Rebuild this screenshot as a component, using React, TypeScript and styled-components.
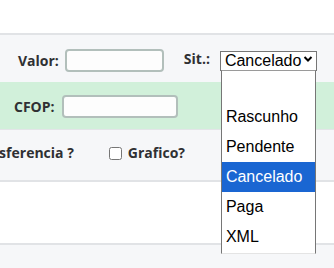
import React from "react";
import styled, { createGlobalStyle } from "styled-components";

const Global = createGlobalStyle`
  html, body { margin: 0; padding: 0; background: #ffffff; }
  body { font-family: "Open Sans", "Noto Sans", sans-serif; width: 334px; height: 268px; overflow: hidden; }
  * { box-sizing: border-box; }
`;

const Page = styled.div`
  display: flex;
  flex-direction: column;
  width: 334px;
  height: 268px;
  overflow: hidden;
  background: #f6f7f9;
`;

const TopSpace = styled.div`
  height: 33px;
  background: #ffffff;
`;

const Row = styled.div<{ $bg: string; $h: number; $top: number; $pl: number; $bt?: boolean; $bb?: boolean }>`
  display: flex;
  align-items: flex-start;
  height: ${(p) => p.$h}px;
  padding-top: ${(p) => p.$top}px;
  padding-left: ${(p) => p.$pl}px;
  background: ${(p) => p.$bg};
  border-top: ${(p) => (p.$bt ? "2px solid #e1e3e6" : "none")};
  border-bottom: ${(p) => (p.$bb ? "1px solid #e3e5e8" : "none")};
  position: relative;
  flex-shrink: 0;
`;

const Field = styled.div<{ $ml?: number; $gap: number }>`
  display: flex;
  align-items: center;
  gap: ${(p) => p.$gap}px;
  margin-left: ${(p) => p.$ml ?? 0}px;
`;

const Label = styled.label`
  font-family: "Open Sans", "Noto Sans", sans-serif;
  font-weight: 700;
  font-size: 14px;
  color: #2f3033;
  white-space: nowrap;
  line-height: 20px;
`;

const TextInput = styled.input<{ $w: number }>`
  width: ${(p) => p.$w}px;
  height: 23px;
  border: 2px solid #b2bfbb;
  border-radius: 4px;
  background: #fdfdfd;
  padding: 0 4px;
  outline: none;
  margin: 0;
`;

const SelectWrap = styled.div`
  position: relative;
  width: 97px;
  height: 20px;
`;

const Select = styled.select`
  appearance: none;
  -webkit-appearance: none;
  width: 97px;
  height: 20px;
  border: 1px solid #767676;
  border-radius: 0;
  background: #ffffff;
  font-family: "Liberation Sans", Arial, sans-serif;
  font-size: 16px;
  color: #000;
  padding: 0 0 0 4px;
  margin: 0;
  line-height: 18px;
  outline: none;
`;

const Chevron = styled.svg`
  position: absolute;
  right: 4px;
  top: 6px;
  width: 10px;
  height: 8px;
  pointer-events: none;
`;

const DropList = styled.ul`
  position: absolute;
  top: 21px;
  left: 1px;
  width: 95px;
  margin: 0;
  padding: 1px 0 1px 0;
  list-style: none;
  background: #ffffff;
  border: 1px solid #767676;
  border-top: 1px solid #9a9a9a;
  border-bottom: 1px solid #e4e4e4;
  z-index: 10;
`;

const Option = styled.li<{ $sel?: boolean }>`
  height: 30px;
  line-height: 30px;
  padding-left: 4px;
  font-family: "Liberation Sans", Arial, sans-serif;
  font-size: 16px;
  color: ${(p) => (p.$sel ? "#ffffff" : "#000000")};
  background: ${(p) => (p.$sel ? "#1a66d2" : "transparent")};
  white-space: nowrap;
`;

const Check = styled.input`
  width: 13px;
  height: 13px;
  margin: 0;
  accent-color: #555;
`;

const WhiteBand = styled.div`
  height: 65px;
  background: #ffffff;
  border-top: 2px solid #e1e3e6;
  border-bottom: 2px solid #e1e3e6;
  flex-shrink: 0;
`;

const options = ["", "Rascunho", "Pendente", "Cancelado", "Paga", "XML"];

export default function App() {
  return (
    <>
      <Global />
      <Page>
        <TopSpace />
        <Row $bg="#f6f7f9" $h={49} $top={14} $pl={18} $bt>
          <Field $gap={6}>
            <Label>Valor:</Label>
            <TextInput $w={99} />
          </Field>
          <Field $gap={10} $ml={20}>
            <Label>Sit.:</Label>
            <SelectWrap>
              <Select defaultValue="Cancelado">
                {options.map((o) => (
                  <option key={o} value={o}>
                    {o}
                  </option>
                ))}
              </Select>
              <Chevron viewBox="0 0 10 8">
                <path d="M1.5 2 L5 5.5 L8.5 2" fill="none" stroke="#000" strokeWidth="2" />
              </Chevron>
              <DropList>
                {options.map((o) => (
                  <Option key={o} $sel={o === "Cancelado"}>
                    {o}
                  </Option>
                ))}
              </DropList>
            </SelectWrap>
          </Field>
        </Row>
        <Row $bg="#d1f0da" $h={48} $top={13} $pl={14} $bb>
          <Field $gap={7}>
            <Label>CFOP:</Label>
            <TextInput $w={116} />
          </Field>
        </Row>
        <Row $bg="#f6f7f9" $h={50} $top={13} $pl={0}>
          <Field $gap={6} $ml={-33}>
            <Label>Transferencia ?</Label>
          </Field>
          <Field $gap={6} $ml={35}>
            <Check type="checkbox" />
            <Label>Grafico?</Label>
          </Field>
        </Row>
        <WhiteBand />
      </Page>
    </>
  );
}
